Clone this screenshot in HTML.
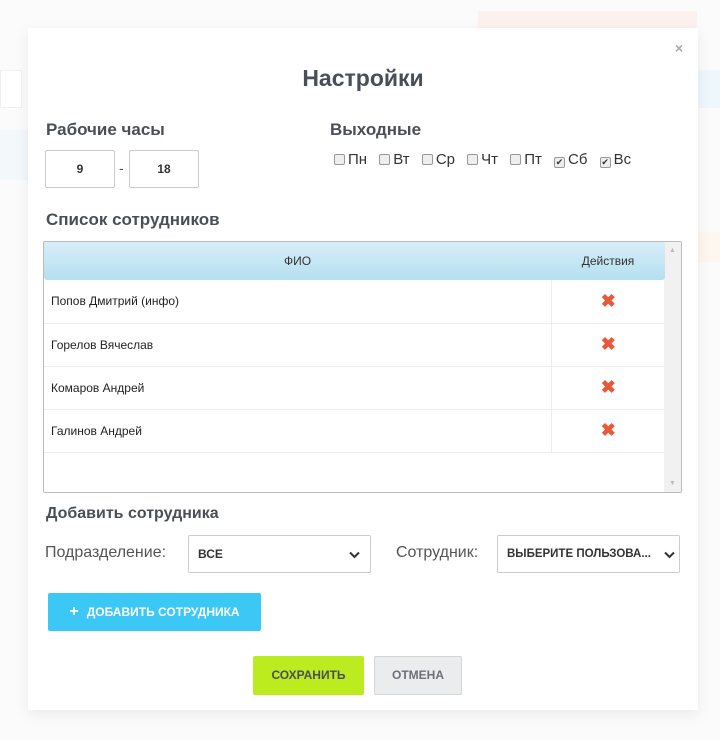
<!DOCTYPE html>
<html><head><meta charset="utf-8"><style>
*{box-sizing:border-box;margin:0;padding:0}
body{width:720px;height:740px;background:#fbfbfb;font-family:"Liberation Sans",sans-serif;position:relative;overflow:hidden;color:#4a4f57}
.a{position:absolute}
.modal{left:28px;top:28px;width:670px;height:682px;background:#fff;box-shadow:0 4px 14px rgba(0,0,0,.07)}
h3{font-size:17px;font-weight:bold;color:#4a4f57}
.inp{border:1px solid #ccc;border-radius:2px;height:38px;text-align:center;line-height:36px;font-size:12px;font-weight:bold;color:#333}
.cb{display:inline-block;width:11px;height:11px;border:1px solid #999;border-radius:2px;background:#eee;vertical-align:-1px;margin-right:3px;font-size:9px;line-height:9px;text-align:center;color:#333;font-style:normal}
.days{font-size:15px;color:#333}
.days span{margin-right:8px}
table{border-collapse:collapse;font-size:12px;color:#222}
td{height:43px;border-bottom:1px solid #eee;padding-left:7px}
.x{color:#e8583a;font-size:18px;font-weight:bold;text-align:center;padding:0;border-left:1px solid #eee}
.sel{border:1px solid #ccc;border-radius:2px;height:38px;font-size:12px;font-weight:bold;color:#333;line-height:36px;padding-left:9px}
.sel svg{position:absolute;right:10px;top:15px}
.btn{font-size:12px;font-weight:bold;text-align:center;border-radius:2px}
</style></head><body>
<div class="a" style="left:478px;top:11px;width:219px;height:20px;background:#fcf1ef"></div>
<div class="a" style="left:0;top:70px;width:22px;height:38px;border:1px solid #f0f0f0;background:#fff"></div>
<div class="a" style="left:0;top:130px;width:30px;height:50px;background:#f3f8fb"></div>
<div class="a" style="left:698px;top:70px;width:22px;height:38px;background:#eef7fb"></div>
<div class="a" style="left:698px;top:232px;width:22px;height:30px;background:#fdf7ef"></div>
<div class="a modal">
  <div class="a" style="right:15px;top:12px;font-size:14px;color:#aaa;font-weight:bold">×</div>
  <div class="a" style="left:0;width:100%;top:37px;text-align:center;font-size:23px;font-weight:bold;color:#4a4f57">Настройки</div>
  <h3 class="a" style="left:18px;top:92px">Рабочие часы</h3>
  <div class="a inp" style="left:17px;top:122px;width:70px">9</div>
  <div class="a" style="left:91px;top:132px;font-size:14px">-</div>
  <div class="a inp" style="left:101px;top:122px;width:70px">18</div>
  <h3 class="a" style="left:302px;top:92px">Выходные</h3>
  <div class="a days" style="left:306px;top:123px"><span><i class="cb"></i>Пн</span> <span><i class="cb"></i>Вт</span> <span><i class="cb"></i>Ср</span> <span><i class="cb"></i>Чт</span> <span><i class="cb"></i>Пт</span> <span><i class="cb">✔</i>Сб</span> <span><i class="cb">✔</i>Вс</span></div>
  <h3 class="a" style="left:18px;top:182px">Список сотрудников</h3>
  <div class="a" style="left:15px;top:213px;width:639px;height:252px;border:1px solid #bbb;border-radius:2px;overflow:hidden">
    <div class="a" style="right:0;top:0;width:17px;height:100%;background:#f1f1f1"><div style="color:#bbb;font-size:7px;text-align:center;margin-top:5px">▲</div><div style="color:#bbb;font-size:7px;text-align:center;position:absolute;bottom:5px;width:100%">▼</div></div>
    <div class="a" style="left:0;top:0;width:621px;height:38px;background:linear-gradient(#d6eef8,#b6dff0);border-radius:0 0 3px 3px;font-size:12px;color:#333">
      <div class="a" style="left:0;width:507px;top:12px;text-align:center">ФИО</div>
      <div class="a" style="left:507px;width:114px;top:12px;text-align:center">Действия</div>
    </div>
    <table class="a" style="left:0;top:38px;width:621px">
      <tr><td style="width:507px">Попов Дмитрий (инфо)</td><td class="x">✖</td></tr>
      <tr><td>Горелов Вячеслав</td><td class="x">✖</td></tr>
      <tr><td>Комаров Андрей</td><td class="x">✖</td></tr>
      <tr><td>Галинов Андрей</td><td class="x">✖</td></tr>
    </table>
  </div>
  <h3 class="a" style="left:18px;top:477px;font-size:16px">Добавить сотрудника</h3>
  <div class="a" style="left:17px;top:516px;font-size:16px;color:#555">Подразделение:</div>
  <div class="a sel" style="left:160px;top:507px;width:183px">ВСЕ<svg width="11" height="8" viewBox="0 0 11 8"><path d="M1 1.5l4.5 4.5 4.5-4.5" fill="none" stroke="#333" stroke-width="2"/></svg></div>
  <div class="a" style="left:368px;top:516px;font-size:16px;color:#555">Сотрудник:</div>
  <div class="a sel" style="left:469px;top:507px;width:183px;font-size:11.5px">ВЫБЕРИТЕ ПОЛЬЗОВА...<svg width="11" height="8" viewBox="0 0 11 8" style="right:4px"><path d="M1 1.5l4.5 4.5 4.5-4.5" fill="none" stroke="#333" stroke-width="2"/></svg></div>
  <div class="a btn" style="left:20px;top:565px;width:213px;height:38px;background:#3cc8f4;color:#fff;line-height:38px"><b style="font-size:16px;margin-right:8px">+</b>ДОБАВИТЬ СОТРУДНИКА</div>
  <div class="a btn" style="left:225px;top:628px;width:111px;height:39px;background:#bcec1f;color:#4a4f57;line-height:39px">СОХРАНИТЬ</div>
  <div class="a btn" style="left:346px;top:628px;width:88px;height:39px;background:#ebecee;border:1px solid #d5d5d5;color:#6b7079;line-height:37px">ОТМЕНА</div>
</div>
</body></html>
